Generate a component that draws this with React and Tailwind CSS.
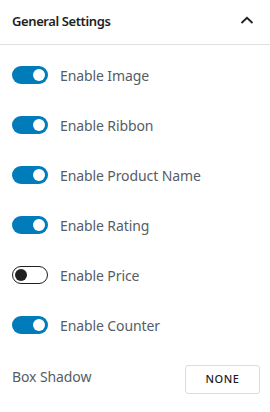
import React from "react";

function Toggle({ on }) {
  if (on) {
    return (
      <div className="relative w-[36px] h-[18px] rounded-full bg-[#007cba] shrink-0">
        <div className="absolute right-[3px] top-[3px] w-[12px] h-[12px] rounded-full bg-white" />
      </div>
    );
  }
  return (
    <div className="relative w-[36px] h-[18px] rounded-full bg-white border border-[#1e1e1e] shrink-0">
      <div className="absolute left-[2px] top-[2px] w-[12px] h-[12px] rounded-full bg-[#1e1e1e]" />
    </div>
  );
}

const rows = [
  ["Enable Image", true],
  ["Enable Ribbon", true],
  ["Enable Product Name", true],
  ["Enable Rating", true],
  ["Enable Price", false],
  ["Enable Counter", true],
];

export default function App() {
  return (
    <div
      className="w-[270px] h-[412px] bg-white overflow-hidden"
      style={{ fontFamily: '"Noto Sans", "Open Sans", sans-serif' }}
    >
      <div className="h-[45px] flex items-center justify-between pl-[12px] pr-[16px] border-b border-[#e0e0e0]">
        <span className="text-[13px] font-semibold tracking-[-0.4px] text-[#1e1e1e]">General Settings</span>
        <svg width="14" height="8" viewBox="0 0 14 8" className="mb-[4px]">
          <path d="M1.5 7 L7 1.8 L12.5 7" fill="none" stroke="#1e1e1e" strokeWidth="1.8" />
        </svg>
      </div>
      <div className="pt-[5px] px-[12px]">
        {rows.map(([label, on]) => (
          <div key={label} className="h-[50px] flex items-center gap-[12px]">
            <Toggle on={on} />
            <span className="text-[14px] tracking-[-0.1px] text-[#555d66]">{label}</span>
          </div>
        ))}
        <div className="flex items-center justify-between mt-[15px]">
          <span className="text-[14px] tracking-[-0.1px] text-[#555d66] mb-[6px]">Box Shadow</span>
          <button className="w-[75px] h-[29px] mr-[-2px] rounded-[3px] border border-[#dcdcde] bg-white text-[11px] font-medium tracking-[0.5px] text-[#1e1e1e]">
            NONE
          </button>
        </div>
      </div>
    </div>
  );
}
